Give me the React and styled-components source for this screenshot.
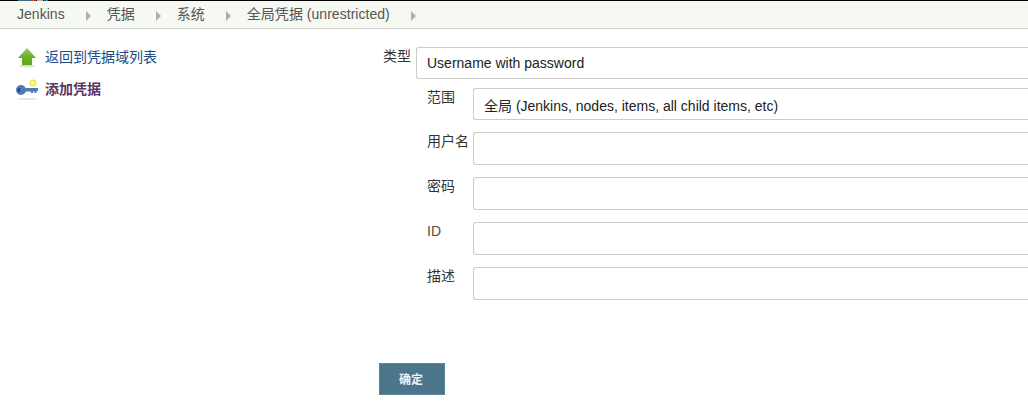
import React from "react";
import styled, { createGlobalStyle } from "styled-components";

const GlobalStyle = createGlobalStyle`
  html, body {
    margin: 0;
    padding: 0;
    background: #fff;
    overflow: hidden;
  }
  body {
    font-family: "Liberation Sans", "Noto Sans CJK SC", sans-serif;
    font-size: 14px;
    color: #333;
  }
`;

const Page = styled.div`
  position: relative;
  width: 1028px;
  height: 419px;
  border-top: 1px solid #000;
  box-sizing: border-box;
`;

/* scrap of the page header left at the very top of the shot */
const HeaderScrap = styled.div`
  position: absolute;
  top: -1px;
  left: 18px;
  width: 30px;
  height: 1px;
  background: linear-gradient(
    90deg,
    #3f6c80 0 14px,
    #c8403a 14px 18px,
    #000 18px 19px,
    #b5b5b5 19px 25px,
    #000 25px 26px,
    #3f6c80 26px 30px
  );
`;

const Breadcrumbs = styled.nav`
  height: 28px;
  box-sizing: border-box;
  display: flex;
  align-items: center;
  padding-left: 17px;
  background: #f6f8f2;
  border-bottom: 1px solid #d3d3d3;
  color: #555;
`;

const Crumb = styled.span`
  line-height: 29px;
  letter-spacing: 0.03px;
`;

const Arrow = styled.span`
  width: 0;
  height: 0;
  margin: 2px 16px 0 21px;
  border-top: 5px solid transparent;
  border-bottom: 5px solid transparent;
  border-left: 5px solid #b0b0b0;
`;

const Main = styled.div`
  display: flex;
`;

const Sidebar = styled.aside`
  width: 379px;
  flex-shrink: 0;
  padding: 15px 0 0 15px;
  box-sizing: border-box;
`;

const TaskRow = styled.a`
  display: flex;
  align-items: center;
  gap: 5px;
  height: 24px;
  margin-bottom: 8px;
  color: ${(p) => (p.$active ? "#5c3566" : "#204a87")};
  font-weight: ${(p) => (p.$active ? 700 : 400)};
`;

const TaskIcon = styled.svg`
  width: 25px;
  height: 24px;
  flex-shrink: 0;
`;

const Form = styled.form`
  flex: 1;
  min-width: 0;
  padding-top: 18px;
`;

const TopRow = styled.div`
  display: flex;
  margin-bottom: 9px;
`;

const TopLabel = styled.label`
  width: 37px;
  flex-shrink: 0;
  padding: 1px 0 0 4px;
  box-sizing: border-box;
  line-height: 16px;
`;

const Fields = styled.div`
  display: flex;
  flex-direction: column;
  gap: 12px;
  padding-left: 48px;
`;

const Row = styled.div`
  display: flex;
`;

const FieldLabel = styled.label`
  width: 46px;
  flex-shrink: 0;
  line-height: 18px;
  color: ${(p) => (p.$muted ? "#5a4a3a" : "inherit")};
`;

const Input = styled.div`
  box-sizing: border-box;
  height: ${(p) => (p.$short ? 32 : 33)}px;
  padding-left: 10px;
  line-height: ${(p) => (p.$select ? 34 : 30)}px;
  flex: 1;
  margin-right: -4px;
  border: 1px solid #ccc;
  border-right: 0;
  border-radius: 3px 0 0 3px;
  background: #fff;
  color: #222;
  white-space: nowrap;
`;

const Submit = styled.button`
  display: block;
  width: 66px;
  height: 32px;
  margin: 63px 0 0 0;
  padding: 0 2px 2px 0;
  border: 1px solid #5b8499;
  background: #4b758b;
  color: #f2f2f2;
  font: 700 12px "Liberation Sans", "Noto Sans CJK SC", sans-serif;
`;

const ArrowUpIcon = () => (
  <TaskIcon viewBox="0 0 25 24">
    <defs>
      <linearGradient id="up" x1="0" y1="0" x2="0" y2="1">
        <stop offset="0" stopColor="#9cc878" />
        <stop offset="0.5" stopColor="#6fae2c" />
        <stop offset="1" stopColor="#5fa80f" />
      </linearGradient>
    </defs>
    <ellipse cx="12" cy="22" rx="8" ry="1.3" fill="#ddd" />
    <path d="M12 4 L21 14 H17 V21 H7 V14 H3 Z" fill="url(#up)" />
  </TaskIcon>
);

const KeyIcon = () => (
  <TaskIcon viewBox="0 0 25 24">
    <ellipse cx="12" cy="23" rx="10" ry="1" fill="#e3e3e3" />
    <circle cx="18" cy="7" r="2.8" fill="#fdf9a0" stroke="#f1e640" strokeWidth="1.4" />
    <path d="M10 12 H23 V15 H21.5 V17 H19.5 V15.5 H18 V17 H16 V15.5 H10 Z" fill="#4f7ab2" />
    <ellipse cx="6" cy="14" rx="5" ry="5" fill="#4f7ab2" />
    <ellipse cx="4" cy="14" rx="1.2" ry="2" fill="#1f3f6e" />
  </TaskIcon>
);

const crumbs = ["Jenkins", "凭据", "系统", "全局凭据 (unrestricted)"];

const fields = [
  { label: "范围", value: "全局 (Jenkins, nodes, items, all child items, etc)", short: true, select: true },
  { label: "用户名" },
  { label: "密码" },
  { label: "ID", muted: true },
  { label: "描述" },
];

export default function App() {
  return (
    <Page>
      <GlobalStyle />
      <HeaderScrap />
      <Breadcrumbs>
        {crumbs.map((c) => (
          <React.Fragment key={c}>
            <Crumb>{c}</Crumb>
            <Arrow />
          </React.Fragment>
        ))}
      </Breadcrumbs>
      <Main>
        <Sidebar>
          <TaskRow>
            <ArrowUpIcon />
            返回到凭据域列表
          </TaskRow>
          <TaskRow $active>
            <KeyIcon />
            添加凭据
          </TaskRow>
        </Sidebar>
        <Form>
          <TopRow>
            <TopLabel>类型</TopLabel>
            <Input $short>Username with password</Input>
          </TopRow>
          <Fields>
            {fields.map((f) => (
              <Row key={f.label}>
                <FieldLabel $muted={f.muted}>{f.label}</FieldLabel>
                <Input $short={f.short} $select={f.select}>{f.value}</Input>
              </Row>
            ))}
          </Fields>
          <Submit type="button">确定</Submit>
        </Form>
      </Main>
    </Page>
  );
}
